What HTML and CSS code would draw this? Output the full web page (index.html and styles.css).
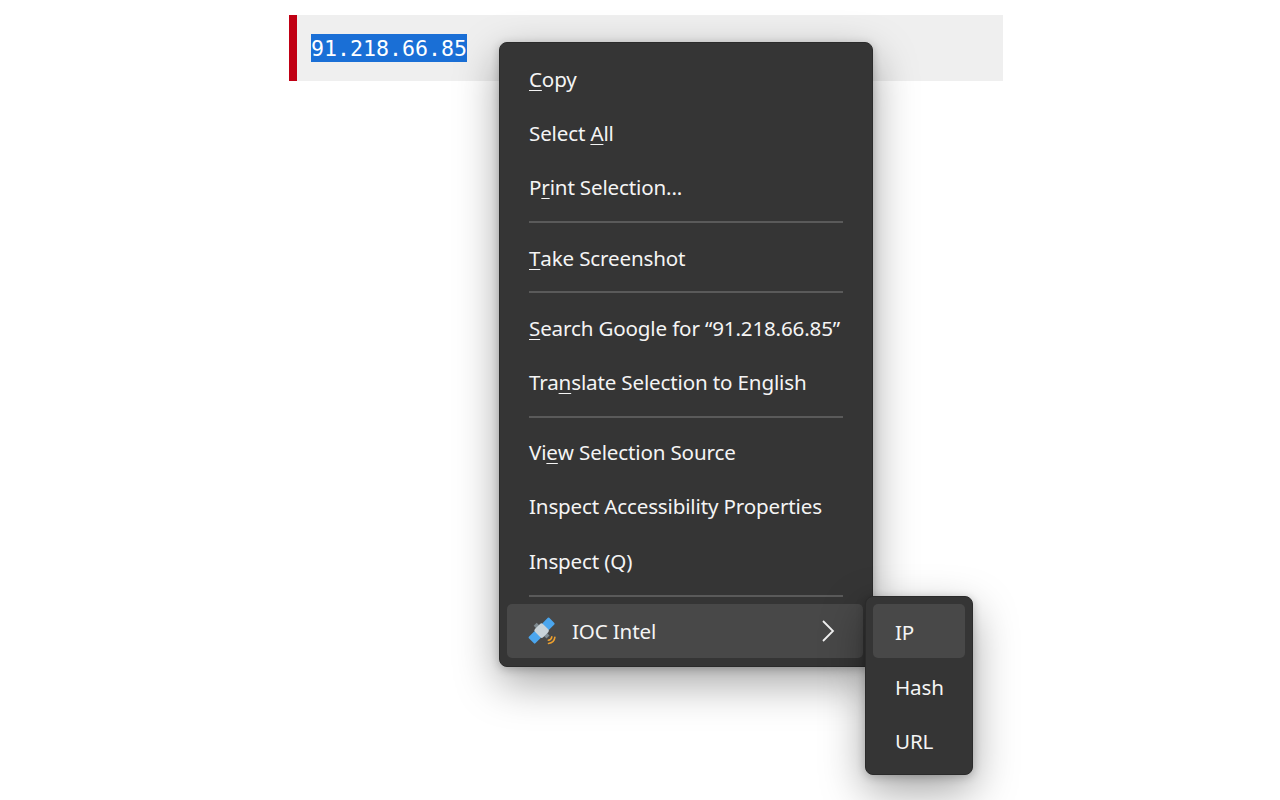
FILE: index.html
```html
<!DOCTYPE html>
<html lang="en">
<head>
    <meta charset="UTF-8">
    <meta name="viewport" content="width=device-width, initial-scale=1.0">
    <title>IOC Intel context menu</title>
    <link rel="stylesheet" href="styles.css">
</head>
<body>
    <div class="ioc-bar">
        <code class="ioc-value"><span class="selected">91.218.66.85</span></code>
    </div>

    <!-- Main context menu -->
    <div class="menu main-menu">
        <div class="item"><u>C</u>opy</div>
        <div class="item">Select <u>A</u>ll</div>
        <div class="item">P<u>r</u>int Selection...</div>
        <div class="sep"></div>
        <div class="item"><u>T</u>ake Screenshot</div>
        <div class="sep"></div>
        <div class="item"><u>S</u>earch Google for “91.218.66.85”</div>
        <div class="item">Tra<u>n</u>slate Selection to English</div>
        <div class="sep"></div>
        <div class="item">Vi<u>e</u>w Selection Source</div>
        <div class="item">Inspect Accessibility Properties</div>
        <div class="item">Inspect (Q)</div>
        <div class="sep"></div>
        <div class="item active has-icon">
            <svg class="sat-icon" viewBox="0 0 32 32" width="32" height="32">
                <!-- satellite: panels and body drawn along one axis, then turned -->
                <g transform="rotate(-45 13.600 15.600)">
                    <rect x="18.500" y="11" width="9.500" height="9.200" rx="1" fill="#4ba6ee"/>
                    <rect x="-0.800" y="11" width="9.500" height="9.200" rx="1" fill="#4ba6ee"/>
                    <rect x="11.500" y="6.500" width="4.200" height="18.200" fill="#7f8a90"/>
                    <rect x="8" y="9.800" width="11.200" height="11.600" rx="2" fill="#c9d3d9"/>
                </g>
                <path d="M20.500 28.500c3.400-.3 6-2.900 6.400-6.300M20.300 25.200c1.800-.2 3.200-1.600 3.500-3.400" stroke="#eda02f" stroke-width="1.600" fill="none" stroke-linecap="round"/>
            </svg>
            <span class="item-label">IOC Intel</span>
            <svg class="chevron" viewBox="0 0 14 24" width="14" height="24">
                <path d="M2 2l10 10L2 22" stroke="#f2f2f2" stroke-width="1.800" fill="none"/>
            </svg>
        </div>
    </div>

    <!-- Submenu -->
    <div class="menu sub-menu">
        <div class="item active">IP</div>
        <div class="item">Hash</div>
        <div class="item">URL</div>
    </div>
</body>
</html>
```

FILE: styles.css
```css
body {
    margin: 0;
    background-color: #fff;
    font-family: "Noto Sans", "Open Sans", sans-serif;
}

.ioc-bar {
    display: flex;
    align-items: center;
    width: 706px;
    height: 66px;
    margin: 15px 0 0 289px;
    background-color: #efefef;
    border-left: 8px solid #c00014;
}

.ioc-value {
    margin-left: 14px;
    font-family: "DejaVu Sans Mono", monospace;
    font-size: 21.600px;
    line-height: 27px;
}

.selected {
    display: inline-block;
    padding-top: 1px;
    background-color: #1a6fd6;
    color: #fff;
}

.menu {
    position: absolute;
    box-sizing: border-box;
    background-color: #353535;
    border: 1px solid #2b2b2b;
    border-radius: 8px;
    padding: 7px;
    color: #f4f4f4;
    font-size: 20.600px;
    letter-spacing: -0.160px;
    box-shadow: 0 16px 44px rgba(0, 0, 0, 0.36), 0 2px 10px rgba(0, 0, 0, 0.22);
}

.main-menu {
    left: 499px;
    top: 42px;
    width: 374px;
    height: 625px;
    padding: 8.500px 9px 7px 7px;
}

.sub-menu {
    left: 865px;
    top: 596px;
    width: 108px;
    height: 179px;
}

.item {
    display: flex;
    align-items: center;
    box-sizing: border-box;
    white-space: pre;
    height: 54.400px;
    padding-left: 22px;
    border-radius: 5px;
}

.sub-menu .item {
    padding-top: 2px;
}

.item u {
    text-decoration-thickness: 1px;
    text-underline-offset: 3px;
}

.item.active {
    background-color: #484848;
}

.sep {
    height: 2px;
    margin: 6.500px 20px 7.200px 22px;
    background-color: #5a5a5a;
}

.has-icon {
    padding-left: 21px;
}

.sat-icon {
    flex: none;
}

.item-label {
    margin-left: 12px;
    margin-top: 1px;
    flex: 1;
}

.chevron {
    margin-right: 28px;
}
```
